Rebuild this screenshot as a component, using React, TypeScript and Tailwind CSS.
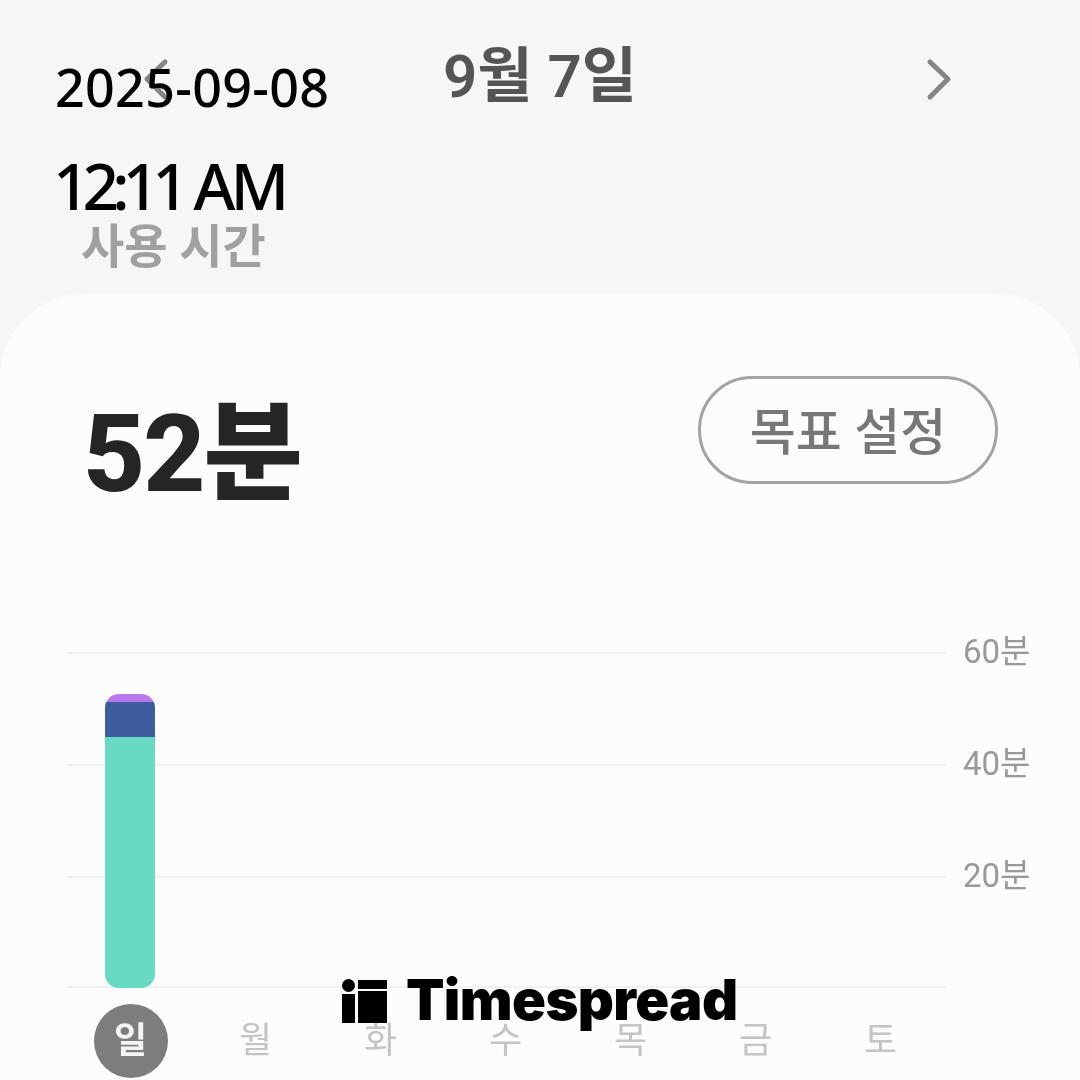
const KR = "font-['Roboto','Noto_Sans_CJK_KR',sans-serif]"

const GRID_ROWS = [
  { label: '60분', height: 'h-[112px]' },
  { label: '40분', height: 'h-[112px]' },
  { label: '20분', height: 'h-[110px]' },
  { label: '', height: 'h-0' },
]

const DAYS = ['일', '월', '화', '수', '목', '금', '토']

function Chart() {
  return (
    <div className="relative mt-[137px] ml-[67px]">
      {GRID_ROWS.map((row) => (
        <div key={row.label || 'base'} className={`flex items-start ${row.height}`}>
          <div className="w-[878px] h-[2px] bg-[#f0f0f0]" />
          {row.label && (
            <span className="ml-[18px] -mt-[23px] text-[33px] leading-[46px] text-[#999999]">{row.label}</span>
          )}
        </div>
      ))}

      {/* Stacked bar for Sunday */}
      <div className="absolute left-[38px] top-[42px] w-[50px] h-[294px] rounded-[14px] overflow-hidden flex flex-col">
        <div className="h-[8px] bg-[#b878ec]" />
        <div className="h-[35px] bg-[#3f5c9e]" />
        <div className="flex-1 bg-[#68d9c2]" />
      </div>
    </div>
  )
}

function DayRow() {
  return (
    <div className="mt-[18px] ml-[68px] flex">
      {DAYS.map((day, i) => (
        <div key={day} className="w-[125px] flex justify-center">
          {i === 0 ? (
            <span className="w-[74px] h-[74px] rounded-full bg-[#7d7d7d] text-[#f4f4f4] font-semibold text-[36px] flex items-center justify-center">
              {day}
            </span>
          ) : (
            <span className="h-[74px] text-[#c4c4c4] text-[36px] flex items-center">{day}</span>
          )}
        </div>
      ))}
    </div>
  )
}

export default function App() {
  return (
    <div className={`relative w-[1080px] h-[1080px] overflow-hidden bg-[#f6f6f6] ${KR}`}>
      <div className="blur-[0.7px]">
        {/* Date header */}
        <div className="h-[156px] pt-[39px] flex items-start justify-between pl-[141px] pr-[126px]">
          <svg width="28" height="44" viewBox="0 0 28 44" fill="none" className="mt-[19px]">
            <polyline points="24,4 6,21 24,39" stroke="#858585" strokeWidth="5" strokeLinecap="round" strokeLinejoin="round" />
          </svg>
          <span className="mr-[15px] text-[60px] leading-[76px] font-semibold text-[#555555]">9월 7일</span>
          <svg width="28" height="44" viewBox="0 0 28 44" fill="none" className="mt-[19px]">
            <polyline points="4,4 22,21 4,39" stroke="#858585" strokeWidth="5" strokeLinecap="round" strokeLinejoin="round" />
          </svg>
        </div>

        <div className="h-[138px] pl-[81px] pt-[61px] text-[47px] leading-[60px] font-bold text-[#a0a0a0]">사용 시간</div>

        {/* Card */}
        <div className="h-[786px] rounded-t-[84px] bg-[#fcfcfc]">
          <div className="pt-[82px] pl-[83px] pr-[82px] flex items-start justify-between">
            <div className="mt-[17px] text-[108px] leading-[122px] font-extrabold text-[#252525] tracking-[-2px]">52분</div>
            <button
              type="button"
              className="w-[300px] h-[108px] pt-[6px] rounded-full border-[3px] border-[#a3a3a3] text-[50px] font-medium text-[#777777]"
            >
              목표 설정
            </button>
          </div>
          <Chart />
          <DayRow />
        </div>
      </div>

      {/* Date/time stamp laid over the screenshot */}
      <div className="absolute left-[55px] top-[52px] text-black font-['Noto_Sans',sans-serif] font-medium">
        <div className="text-[52px] leading-[70px] tracking-[0.3px]">2025-09-08</div>
        <div className="mt-[29px] -ml-[2px] text-[64px] leading-[70px] tracking-[-5px]">
          <span className="tracking-[-7px]">12:11</span> AM
        </div>
      </div>

      {/* Watermark */}
      <div className="absolute left-[342px] top-[972px] flex items-start">
        <svg width="45" height="44" viewBox="0 0 45 44" className="mt-[7px]">
          <circle cx="6.5" cy="6.5" r="6.5" fill="#000" />
          <rect x="0" y="15" width="13" height="29" fill="#000" />
          <rect x="16" y="1" width="29" height="9" fill="#000" />
          <rect x="16" y="12" width="29" height="32" fill="#000" />
        </svg>
        <span className="ml-[19px] text-[56px] leading-[56px] font-black text-black font-['Inter',sans-serif] tracking-[-0.6px]">
          Timespread
        </span>
      </div>
    </div>
  )
}
